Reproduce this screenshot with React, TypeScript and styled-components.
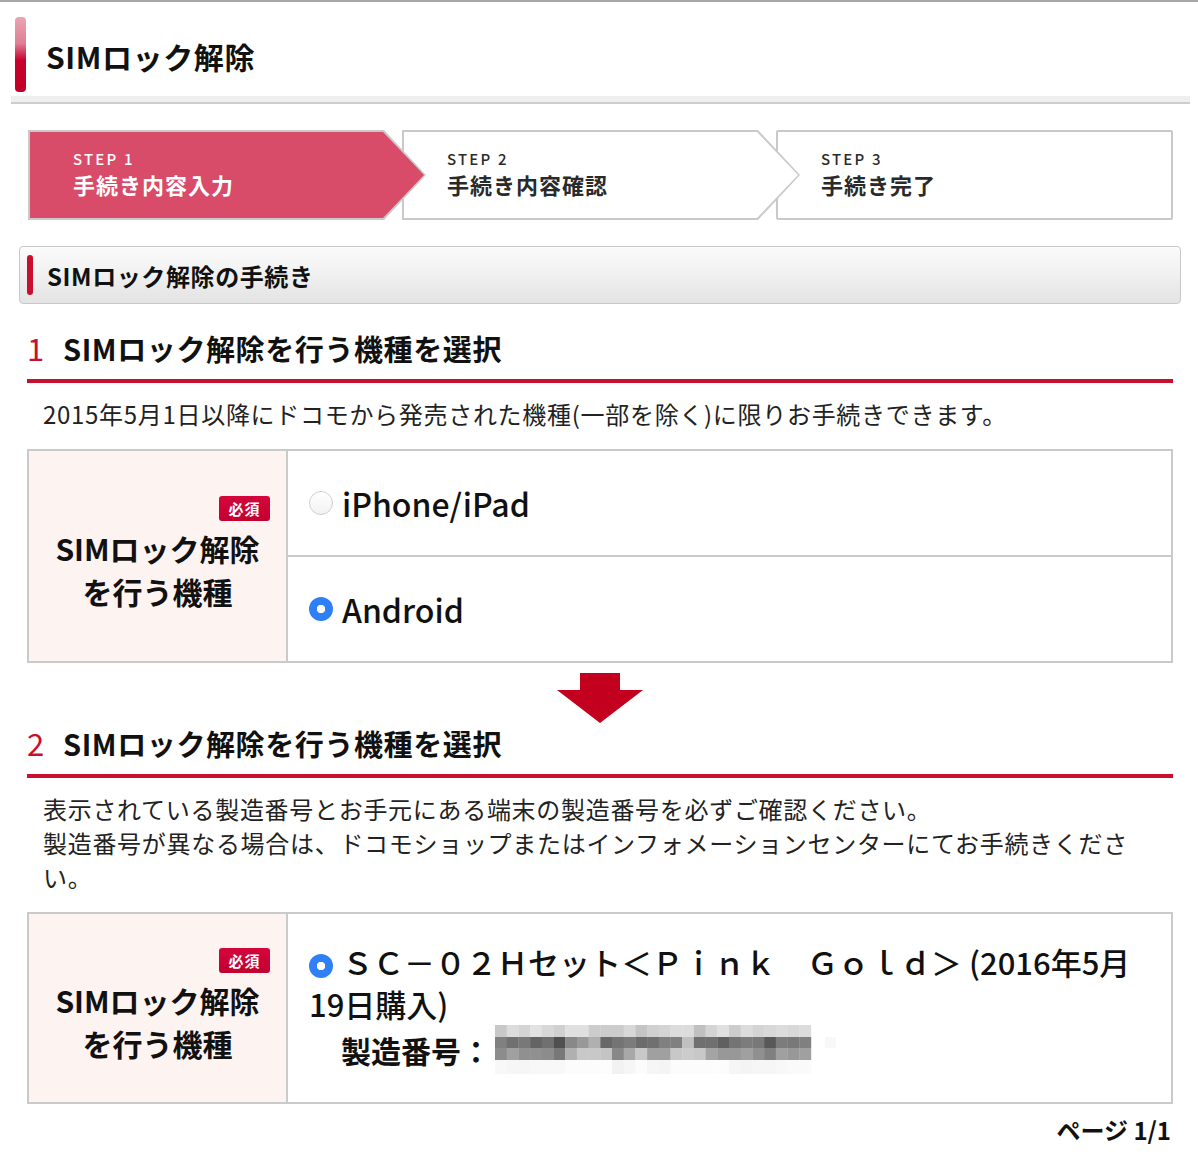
import styled, { createGlobalStyle } from 'styled-components';

const GlobalStyle = createGlobalStyle`
  *, *::before, *::after {
    box-sizing: border-box;
  }
  html, body {
    margin: 0;
    padding: 0;
    background: #fff;
  }
  body {
    font-family: "Noto Sans CJK JP", "Noto Sans", "Liberation Sans", sans-serif;
    color: #111;
  }
`;

const RED = '#c8102e';

const Page = styled.div`
  width: 1198px;
  border-top: 2px solid #a8a8a8;
  padding-bottom: 20px;
`;

const TitleBlock = styled.div`
  margin: 0 8px 0 11px;
`;

const TitleRow = styled.div`
  height: 94px;
  display: flex;
  align-items: center;
  padding: 11px 0 0 4px;
`;

const TitleBar = styled.div`
  width: 11px;
  height: 75px;
  border-radius: 4px;
  background: linear-gradient(to bottom, #eaa4b2 0%, #e07f95 35%, #c8002d 58%, #c00028 100%);
`;

const TitleText = styled.h1`
  margin: 2px 0 0 20px;
  font-size: 30px;
  font-weight: 700;
  letter-spacing: 0.6px;
`;

const TitleRule = styled.div`
  height: 8px;
  background: #efefef;
  border-bottom: 2px solid #cdcdcd;
`;

const Content = styled.div`
  padding: 0 25px 0 27px;
`;

const Steps = styled.div`
  display: flex;
  margin: 26px 0 0 1px;
  height: 90px;
`;

const StepOuter = styled.div<{ $arrow: boolean; $z: number; $first: boolean }>`
  flex: ${(p) => (p.$arrow ? '0 0 398px' : '1 1 auto')};
  margin-left: ${(p) => (p.$first ? '0' : '-24px')};
  z-index: ${(p) => p.$z};
  position: relative;
  padding: 2px;
  background: #c9c9c9;
  border-radius: ${(p) => (p.$arrow ? '0' : '2px')};
  clip-path: ${(p) =>
    p.$arrow
      ? 'polygon(0 0, calc(100% - 42px) 0, 100% 50%, calc(100% - 42px) 100%, 0 100%)'
      : 'none'};
`;

const StepInner = styled.div<{ $arrow: boolean; $active: boolean }>`
  height: 100%;
  background: ${(p) => (p.$active ? '#d84c69' : '#fff')};
  color: ${(p) => (p.$active ? '#fff' : '#2a2a2a')};
  clip-path: ${(p) =>
    p.$arrow
      ? 'polygon(0 0, calc(100% - 41px) 0, 100% 50%, calc(100% - 41px) 100%, 0 100%)'
      : 'none'};
  display: flex;
  flex-direction: column;
  justify-content: center;
  gap: 1px;
  padding: 0 0 4px 43px;
`;

const StepLabel = styled.div`
  font-size: 15px;
  font-weight: 500;
  letter-spacing: 2.2px;
  line-height: 20px;
`;

const StepName = styled.div`
  font-size: 22px;
  font-weight: 700;
  line-height: 28px;
  letter-spacing: 1px;
`;

const SectionHeader = styled.div`
  margin: 26px -8px 0 -8px;
  height: 58px;
  border: 1px solid #c8c8c8;
  border-radius: 4px;
  background: linear-gradient(to bottom, #fbfbfb 0%, #f0f0f0 50%, #e3e3e3 100%);
  display: flex;
  align-items: center;
  padding-left: 7px;
`;

const SectionBar = styled.div`
  width: 6px;
  height: 40px;
  border-radius: 3px;
  background: ${RED};
`;

const SectionText = styled.h2`
  margin: 0 0 0 14px;
  font-size: 24px;
  font-weight: 700;
  letter-spacing: 0.6px;
`;

const Heading = styled.div<{ $top: number }>`
  margin-top: ${(p) => p.$top}px;
  display: flex;
  align-items: center;
  height: 55px;
  padding-bottom: 11px;
  border-bottom: 4px solid ${RED};
`;

const HeadingNum = styled.span`
  width: 36px;
  font-size: 31px;
  font-weight: 400;
  color: ${RED};
  line-height: 40px;
`;

const HeadingText = styled.h3`
  margin: 0;
  font-size: 29px;
  font-weight: 700;
  line-height: 40px;
  letter-spacing: 0.6px;
`;

const Lead = styled.p`
  margin: 0;
  padding: 14px 38px 18px 16px;
  font-size: 24px;
  line-height: 34px;
  letter-spacing: 0.7px;
  color: #222;
`;

const FormTable = styled.div<{ $height: number }>`
  display: grid;
  grid-template-columns: 259px 1fr;
  height: ${(p) => p.$height}px;
  border: 2px solid #cacaca;
`;

const LabelCell = styled.div`
  background: #fdf3f1;
  border-right: 2px solid #cacaca;
  display: flex;
  flex-direction: column;
  justify-content: center;
  align-items: center;
`;

const Badge = styled.span`
  align-self: flex-end;
  margin-right: 16px;
  width: 51px;
  height: 25px;
  border-radius: 3px;
  background: linear-gradient(to bottom, #d4063c, #c20030);
  color: #fff;
  font-size: 15px;
  font-weight: 700;
  line-height: 25px;
  text-align: center;
  letter-spacing: 1px;
`;

const LabelText = styled.div`
  margin-top: 6px;
  font-size: 30px;
  font-weight: 700;
  line-height: 43px;
  text-align: center;
  padding-bottom: 4px;
`;

const Options = styled.div`
  display: flex;
  flex-direction: column;
`;

const Option = styled.label`
  flex: 1;
  display: flex;
  align-items: center;
  padding-left: 21px;
  font-size: 32px;
  font-weight: 500;
  & + & {
    border-top: 2px solid #cacaca;
  }
`;

const Radio = styled.span<{ $checked: boolean }>`
  display: inline-block;
  flex: none;
  width: 24px;
  height: 24px;
  border-radius: 50%;
  vertical-align: -3px;
  margin-right: 9px;
  background: ${(p) =>
    p.$checked
      ? 'radial-gradient(circle, #fff 0 4px, #2f80f6 4.5px)'
      : 'linear-gradient(to bottom, #fff, #f2f2f2)'};
  border: ${(p) => (p.$checked ? 'none' : '1px solid #cfcfcf')};
`;

const ArrowWrap = styled.div`
  display: flex;
  justify-content: center;
  padding-top: 10px;
  height: 60px;
`;

const DeviceCell = styled.div`
  padding: 27px 30px 0 21px;
  font-size: 31px;
  font-weight: 500;
  line-height: 42px;
`;

const Serial = styled.div`
  display: flex;
  align-items: center;
  padding-left: 32px;
  font-weight: 700;
  font-size: 30px;
  line-height: 42px;
`;

const Pager = styled.div`
  margin-top: 9px;
  text-align: right;
  padding-right: 2px;
  font-size: 24px;
  font-weight: 700;
  line-height: 34px;
`;

const steps = [
  { label: 'STEP 1', name: '手続き内容入力' },
  { label: 'STEP 2', name: '手続き内容確認' },
  { label: 'STEP 3', name: '手続き完了' },
];

const mosaic = [
  ['c8', 'dc', 'd4', 'e2', 'd8', 'd0', 'e0', 'e0', 'cc', 'cc', 'cc', 'd8', 'c4', 'd0', 'd4', 'dc', 'dc', 'c0', 'd4', 'e0', 'cc', 'dc', 'd4', 'd8', 'dc', 'd8', 'dc'],
  ['80', '70', '78', '64', '70', '50', '88', '98', 'b0', '68', '74', '7c', '6c', '70', '80', '80', 'c0', '70', '70', '60', '74', '7c', '78', '58', '7c', '78', '80'],
  ['8c', 'a0', '90', '90', '8c', '78', 'b0', 'c8', 'c8', 'c4', '88', 'a8', 'c8', 'a0', 'a0', 'c8', 'cc', 'c8', 'a4', '98', '98', 'a0', '90', '80', 'a0', '98', 'a0'],
  ['f8', 'f6', 'f6', 'f8', 'f8', 'f8', 'fc', 'fc', 'fc', 'fc', 'f2', 'f6', 'fc', 'f6', 'f4', 'fc', 'fc', 'fc', 'fc', 'fc', 'f6', 'f4', 'f6', 'f6', 'f8', 'fa', 'fa'],
];

function Mosaic() {
  const cw = 11.7;
  const rh = [12, 11, 12, 14];
  let y = 0;
  return (
    <svg width="345" height="50" viewBox="0 0 345 50" style={{ marginLeft: 4 }}>
      {mosaic.map((row, r) => {
        const top = y;
        y += rh[r];
        return row.map((v, c) => (
          <rect key={`${r}-${c}`} x={c * cw} y={top} width={cw + 0.3} height={rh[r]} fill={`#${v}${v}${v}`} />
        ));
      })}
      <rect x="330" y="12" width="11" height="11" fill="#f8f8f8" />
    </svg>
  );
}

function DownArrow() {
  return (
    <svg width="86" height="50" viewBox="0 0 86 50">
      <polygon points="23,0 63,0 63,17 86,17 43,50 0,17 23,17" fill="#c4001f" />
    </svg>
  );
}

function LabelBox() {
  return (
    <LabelCell>
      <Badge>必須</Badge>
      <LabelText>
        SIMロック解除
        <br />
        を行う機種
      </LabelText>
    </LabelCell>
  );
}

export default function App() {
  return (
    <Page>
      <GlobalStyle />
      <TitleBlock>
        <TitleRow>
          <TitleBar />
          <TitleText>SIMロック解除</TitleText>
        </TitleRow>
        <TitleRule />
      </TitleBlock>

      <Content>
        <Steps>
          {steps.map((s, i) => (
            <StepOuter key={s.label} $arrow={i < 2} $z={3 - i} $first={i === 0}>
              <StepInner $arrow={i < 2} $active={i === 0}>
                <StepLabel>{s.label}</StepLabel>
                <StepName>{s.name}</StepName>
              </StepInner>
            </StepOuter>
          ))}
        </Steps>

        <SectionHeader>
          <SectionBar />
          <SectionText>SIMロック解除の手続き</SectionText>
        </SectionHeader>

        <Heading $top={24}>
          <HeadingNum>1</HeadingNum>
          <HeadingText>SIMロック解除を行う機種を選択</HeadingText>
        </Heading>
        <Lead>2015年5月1日以降にドコモから発売された機種(一部を除く)に限りお手続きできます。</Lead>

        <FormTable $height={214}>
          <LabelBox />
          <Options>
            <Option>
              <Radio $checked={false} />
              iPhone/iPad
            </Option>
            <Option>
              <Radio $checked />
              Android
            </Option>
          </Options>
        </FormTable>

        <ArrowWrap>
          <DownArrow />
        </ArrowWrap>

        <Heading $top={0}>
          <HeadingNum>2</HeadingNum>
          <HeadingText>SIMロック解除を行う機種を選択</HeadingText>
        </Heading>
        <Lead>
          表示されている製造番号とお手元にある端末の製造番号を必ずご確認ください。
          <br />
          製造番号が異なる場合は、ドコモショップまたはインフォメーションセンターにてお手続きください。
        </Lead>

        <FormTable $height={192}>
          <LabelBox />
          <DeviceCell>
            <Radio $checked />
            ＳＣ－０２Ｈセット＜Ｐｉｎｋ　Ｇｏｌｄ＞ (2016年5月19日購入)
            <Serial>
              製造番号：
              <Mosaic />
            </Serial>
          </DeviceCell>
        </FormTable>

        <Pager>ページ 1/1</Pager>
      </Content>
    </Page>
  );
}
